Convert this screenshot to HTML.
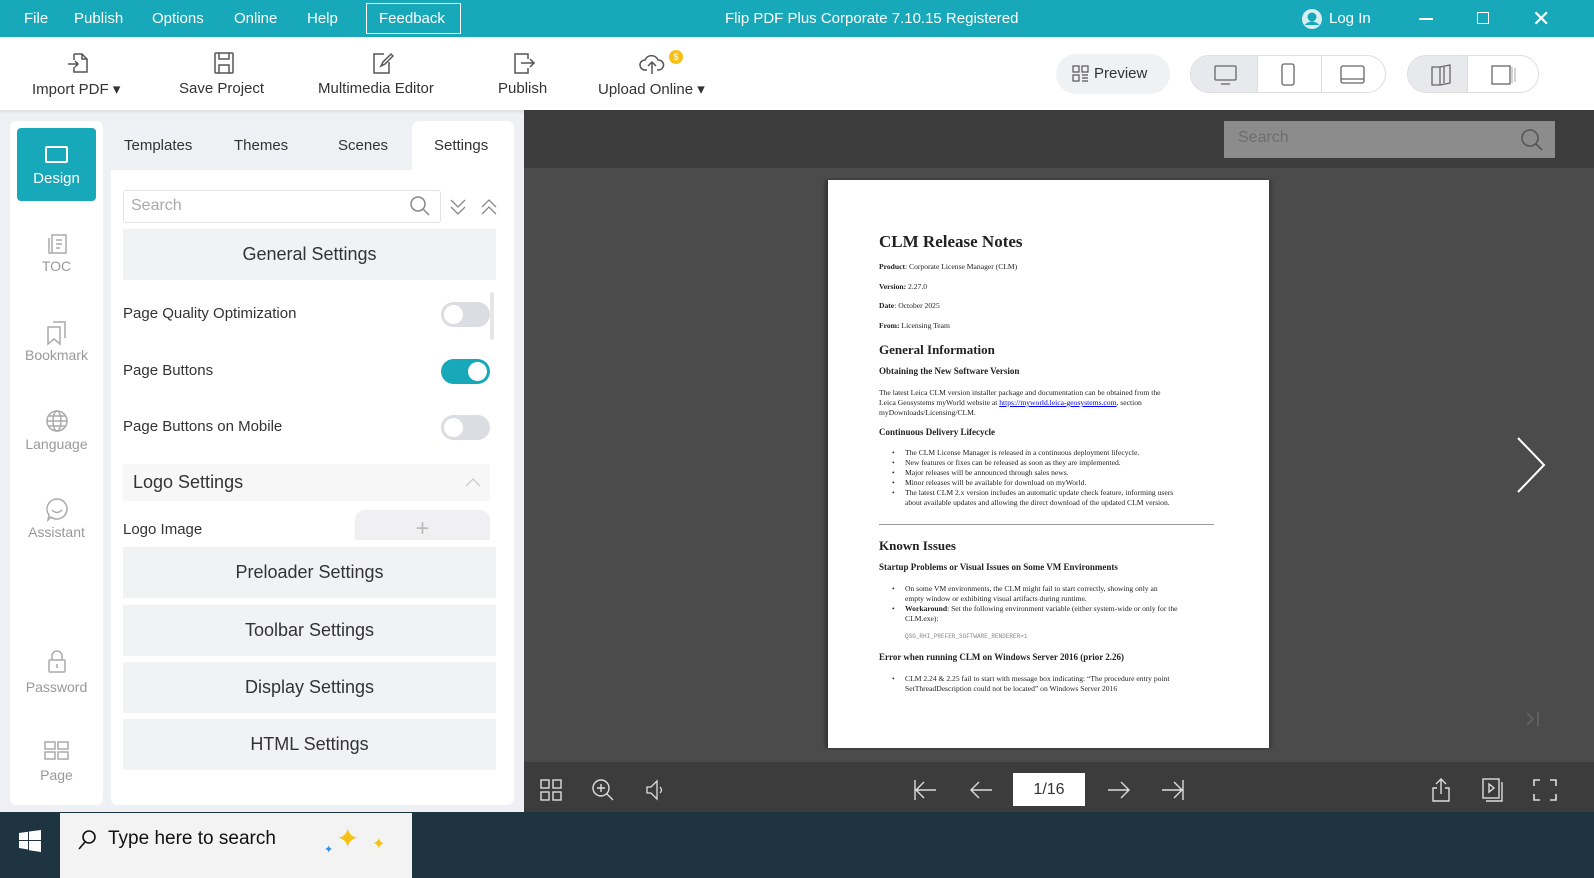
<!DOCTYPE html>
<html><head><meta charset="utf-8"><style>
*{margin:0;padding:0;box-sizing:border-box}
body{width:1594px;height:878px;overflow:hidden;font-family:"Liberation Sans","DejaVu Sans",sans-serif;position:relative;background:#eef0f3}
.a{position:absolute}
.tb{left:0;top:0;width:1594px;height:37px;background:#17a8b9;color:#fff;font-size:15px}
.tb span{position:absolute;top:10px}
.tool{left:0;top:37px;width:1594px;height:73px;background:#fff;box-shadow:0 2px 3px rgba(0,0,0,.08)}
.tl{position:absolute;top:80px;font-size:15px;color:#333;white-space:nowrap}
.nav{left:10px;top:121px;width:93px;height:684px;background:#fff;border-radius:6px}
.ni{position:absolute;left:0;width:93px;text-align:center;font-size:14px;color:#999}
.pan{left:111px;top:121px;width:403px;height:684px;background:#fff;border-radius:6px}
.tabs{left:111px;top:121px;width:403px;height:49px;background:#eef0f3}
.tab{position:absolute;top:137px;font-size:15px;color:#333}
.sec{position:absolute;left:123px;width:373px;height:51px;background:#f1f2f4;text-align:center;line-height:51px;font-size:18px;color:#333}
.row{position:absolute;left:123px;font-size:15px;color:#333}
.tg{position:absolute;left:441px;width:49px;height:25px;border-radius:13px;background:#dcdde2}
.tg::after{content:"";position:absolute;left:3px;top:3px;width:19px;height:19px;border-radius:50%;background:#fff}
.tg.on{background:#17a8b9}.tg.on::after{left:27px}
.vw{left:524px;top:110px;width:1070px;height:702px;background:#4b4b4b}
.pg{left:828px;top:180px;width:441px;height:568px;background:#fff;box-shadow:-3px 0 3px rgba(0,0,0,.3),3px 0 3px rgba(0,0,0,.2);font-family:"Liberation Serif",serif;color:#222}
.pg div{position:absolute;left:51px;white-space:nowrap;font-size:7.6px;line-height:10px}
.pg .h1{font-size:17px;font-weight:bold;line-height:20px}
.pg .h2{font-size:13px;font-weight:bold;line-height:15px}
.pg .h3{font-size:9px;font-weight:bold;line-height:11px}
.pg .li{left:77px}
.pg .li::before{content:"•";position:absolute;left:-13px}
.task{left:0;top:812px;width:1594px;height:66px;background:#1e3441}
</style></head><body>
<div class="a tb">
<span style="left:24px">File</span><span style="left:74px">Publish</span><span style="left:152px">Options</span><span style="left:234px">Online</span><span style="left:307px">Help</span>
<div class="a" style="left:366px;top:3px;width:95px;height:31px;border:1px solid #fff"></div><span style="left:379px">Feedback</span>
<span style="left:725px">Flip PDF Plus Corporate 7.10.15 Registered</span>
<svg class="a" style="left:1301px;top:8px" width="22" height="22"><circle cx="11" cy="11" r="10" fill="#d9eef1"/><circle cx="11" cy="9" r="4.5" fill="#17a8b9"/><path d="M3.5 17 Q11 10 18.5 17" fill="#17a8b9"/></svg>
<span style="left:1329px">Log In</span>
<div class="a" style="left:1419px;top:18px;width:14px;height:2px;background:#fff"></div>
<div class="a" style="left:1477px;top:12px;width:12px;height:12px;border:1.5px solid #fff"></div>
<span style="left:1532px;top:6px;font-size:22px">✕</span>
</div>
<div class="a tool">
<svg class="a" style="left:66px;top:14px" width="24" height="24" fill="none" stroke="#555" stroke-width="1.5"><path d="M8 3h8l5 5v13H8v-5M8 9V3M16 3v5h5M2 13h10M9 10l3 3-3 3"/></svg>
<svg class="a" style="left:212px;top:14px" width="24" height="24" fill="none" stroke="#555" stroke-width="1.5"><rect x="3" y="2" width="18" height="20" rx="1"/><path d="M7 2v6h10V2M7 22v-8h10v8"/></svg>
<svg class="a" style="left:370px;top:14px" width="24" height="24" fill="none" stroke="#555" stroke-width="1.5"><path d="M14 3H4v19h15V11M11 15l2-4 8-8 2 2-8 8z"/></svg>
<svg class="a" style="left:511px;top:14px" width="26" height="24" fill="none" stroke="#555" stroke-width="1.5"><path d="M17 8V3H4v19h13v-5M10 12h13M19 8l4 4-4 4"/></svg>
<svg class="a" style="left:639px;top:14px" width="32" height="24" fill="none" stroke="#555" stroke-width="1.5"><path d="M8 19H6a5 5 0 0 1 0-10 7 7 0 0 1 13 0 5 5 0 0 1 1 10h-2M13 23V12M9 15l4-4 4 4"/></svg>
<div class="a" style="left:669px;top:13px;width:14px;height:14px;border-radius:50%;background:#f5c116;color:#fff;font-size:9px;text-align:center;line-height:14px">$</div>
<div class="tl" style="left:32px;top:43px">Import PDF ▾</div>
<div class="tl" style="left:179px;top:43px">Save Project</div>
<div class="tl" style="left:318px;top:43px">Multimedia Editor</div>
<div class="tl" style="left:498px;top:43px">Publish</div>
<div class="tl" style="left:598px;top:43px">Upload Online ▾</div>
<div class="a" style="left:1056px;top:17px;width:114px;height:40px;border-radius:20px;background:#f0f1f3"></div>
<svg class="a" style="left:1072px;top:28px" width="18" height="18" fill="none" stroke="#555" stroke-width="1.2"><rect x="1" y="1" width="6" height="6"/><rect x="10" y="1" width="6" height="6"/><rect x="1" y="10" width="6" height="6"/><path d="M10 10h6M10 13h6M10 16h6"/></svg>
<div class="tl" style="left:1094px;top:28px">Preview</div>
<div class="a" style="left:1190px;top:18px;width:196px;height:38px;border-radius:19px;border:1px solid #ddd;overflow:hidden"><div class="a" style="left:0;top:0;width:67px;height:38px;background:#e8e9ec;border-right:1px solid #ddd"></div><div class="a" style="left:130px;top:0;width:1px;height:38px;background:#ddd"></div></div>
<svg class="a" style="left:1213px;top:27px" width="26" height="22" fill="none" stroke="#666" stroke-width="1.3"><rect x="2" y="2" width="21" height="14" rx="1"/><path d="M8 20h9"/></svg>
<svg class="a" style="left:1280px;top:26px" width="16" height="24" fill="none" stroke="#666" stroke-width="1.3"><rect x="2" y="1" width="12" height="21" rx="2"/></svg>
<svg class="a" style="left:1340px;top:28px" width="26" height="20" fill="none" stroke="#666" stroke-width="1.3"><rect x="1" y="1" width="23" height="17" rx="2"/><path d="M1 14h23"/></svg>
<div class="a" style="left:1407px;top:18px;width:132px;height:38px;border-radius:19px;border:1px solid #ddd;overflow:hidden"><div class="a" style="left:0;top:0;width:60px;height:38px;background:#e8e9ec;border-right:1px solid #ddd"></div></div>
<svg class="a" style="left:1430px;top:26px" width="24" height="24" fill="none" stroke="#666" stroke-width="1.3"><path d="M2 4h8v18H2zM10 22l10-2V2l-10 2M14 4v16"/></svg>
<svg class="a" style="left:1490px;top:26px" width="28" height="24" fill="none" stroke="#666" stroke-width="1.3"><rect x="2" y="3" width="18" height="18"/><path d="M22 4v16M25 5v14" stroke="#bbb"/></svg>
</div>
<div class="a nav"></div>
<div class="a" style="left:17px;top:128px;width:79px;height:73px;background:#17a8b9;border-radius:4px"></div>
<div class="a" style="left:45px;top:146px;width:23px;height:17px;border:2px solid #fff;border-radius:2px"></div>
<div class="ni" style="left:10px;top:170px;color:#fff;font-size:15px">Design</div>
<svg class="a" style="left:47px;top:233px" width="22" height="22" fill="none" stroke="#aaa" stroke-width="1.5"><rect x="5" y="2" width="14" height="18"/><path d="M2 5v15h3M9 7h6M9 11h6M9 15h4"/></svg>
<div class="ni" style="left:10px;top:258px">TOC</div>
<svg class="a" style="left:45px;top:320px" width="24" height="26" fill="none" stroke="#aaa" stroke-width="1.5"><path d="M8 2h12v16M3 7h12v17l-6-5-6 5z"/></svg>
<div class="ni" style="left:10px;top:347px">Bookmark</div>
<svg class="a" style="left:45px;top:409px" width="24" height="24" fill="none" stroke="#aaa" stroke-width="1.5"><circle cx="12" cy="12" r="10"/><ellipse cx="12" cy="12" rx="4" ry="10"/><path d="M2 12h20M4 7h16M4 17h16"/></svg>
<div class="ni" style="left:10px;top:436px">Language</div>
<svg class="a" style="left:45px;top:497px" width="24" height="26" fill="none" stroke="#aaa" stroke-width="1.5"><path d="M12 2a10 10 0 1 1-6 18l-3 3 1-5A10 10 0 0 1 12 2zM7 13q5 5 10 0"/></svg>
<div class="ni" style="left:10px;top:524px">Assistant</div>
<svg class="a" style="left:46px;top:650px" width="22" height="24" fill="none" stroke="#aaa" stroke-width="1.5"><rect x="3" y="10" width="16" height="12" rx="1"/><path d="M6 10V6a5 5 0 0 1 10 0v4M11 14v4"/></svg>
<div class="ni" style="left:10px;top:679px">Password</div>
<svg class="a" style="left:44px;top:741px" width="26" height="20" fill="none" stroke="#aaa" stroke-width="1.5"><rect x="1" y="1" width="10" height="7"/><rect x="14" y="1" width="10" height="7"/><rect x="1" y="11" width="10" height="7"/><rect x="14" y="11" width="10" height="7"/></svg>
<div class="ni" style="left:10px;top:767px">Page</div>
<div class="a pan"></div>
<div class="a tabs"></div>
<div class="a" style="left:412px;top:121px;width:102px;height:49px;background:#fff;border-radius:8px 6px 0 0"></div>
<div class="tab" style="left:124px">Templates</div><div class="tab" style="left:234px">Themes</div><div class="tab" style="left:338px">Scenes</div><div class="tab" style="left:434px">Settings</div>
<div class="a" style="left:123px;top:190px;width:318px;height:33px;border:1px solid #e2e3e6;border-radius:3px"></div>
<div class="a" style="left:131px;top:197px;font-size:16px;color:#aaa">Search</div>
<svg class="a" style="left:409px;top:195px" width="22" height="22" fill="none" stroke="#888" stroke-width="1.5"><circle cx="9" cy="9" r="7"/><path d="M14 14l6 6"/></svg>
<svg class="a" style="left:448px;top:197px" width="20" height="20" fill="none" stroke="#888" stroke-width="1.3"><path d="M3 3l7 7 7-7M3 10l7 7 7-7"/></svg>
<svg class="a" style="left:479px;top:197px" width="20" height="20" fill="none" stroke="#888" stroke-width="1.3"><path d="M3 10l7-7 7 7M3 17l7-7 7 7"/></svg>
<div class="sec" style="top:229px">General Settings</div>
<div class="a" style="left:490px;top:292px;width:4px;height:48px;background:#e6e6e6;border-radius:2px"></div>
<div class="row" style="top:305px">Page Quality Optimization</div><div class="tg" style="top:302px"></div>
<div class="row" style="top:362px">Page Buttons</div><div class="tg on" style="top:359px"></div>
<div class="row" style="top:418px">Page Buttons on Mobile</div><div class="tg" style="top:415px"></div>
<div class="a" style="left:123px;top:464px;width:367px;height:37px;background:#f7f7f8"></div>
<div class="a" style="left:133px;top:472px;font-size:18px;color:#333">Logo Settings</div>
<svg class="a" style="left:464px;top:476px" width="18" height="12" fill="none" stroke="#ccc" stroke-width="1.3"><path d="M2 10l7-7 7 7"/></svg>
<div class="row" style="top:521px">Logo Image</div>
<div class="a" style="left:355px;top:510px;width:135px;height:30px;background:#f0f0f2;border-radius:10px 10px 0 0;color:#bbb;font-size:24px;text-align:center;line-height:38px;overflow:hidden">+</div>
<div class="sec" style="top:547px">Preloader Settings</div>
<div class="sec" style="top:605px">Toolbar Settings</div>
<div class="sec" style="top:662px">Display Settings</div>
<div class="sec" style="top:719px">HTML Settings</div>
<div class="a vw"></div>
<div class="a" style="left:524px;top:110px;width:1070px;height:58px;background:#3c3c3c"></div>
<div class="a" style="left:1224px;top:121px;width:331px;height:37px;background:#8c8c8c"></div>
<div class="a" style="left:1238px;top:129px;font-size:16px;color:#6e6e6e">Search</div>
<svg class="a" style="left:1520px;top:128px" width="24" height="24" fill="none" stroke="#555" stroke-width="1.6"><circle cx="10" cy="10" r="8"/><path d="M16 16l6 6"/></svg>
<div class="a" style="left:524px;top:762px;width:1070px;height:50px;background:#3c3c3c"></div>
<svg class="a" style="left:1514px;top:435px" width="34" height="60" fill="none" stroke="#fff" stroke-width="2"><path d="M4 3l26 27L4 57"/></svg>
<svg class="a" style="left:1524px;top:710px" width="20" height="18" fill="none" stroke="#666" stroke-width="1.5"><path d="M3 3l6 6-6 6M14 2v14"/></svg>
<div class="a pg">
<div class="h1" style="top:52px">CLM Release Notes</div>
<div style="top:82px"><b>Product</b>: Corporate License Manager (CLM)</div>
<div style="top:102px"><b>Version:</b> 2.27.0</div>
<div style="top:121px"><b>Date</b>: October 2025</div>
<div style="top:141px"><b>From:</b> Licensing Team</div>
<div class="h2" style="top:162px">General Information</div>
<div class="h3" style="top:186px">Obtaining the New Software Version</div>
<div style="top:208px">The latest Leica CLM version installer package and documentation can be obtained from the</div>
<div style="top:218px">Leica Geosystems myWorld website at <u style="color:#00e">https://myworld.leica-geosystems.com</u>, section</div>
<div style="top:228px">myDownloads/Licensing/CLM.</div>
<div class="h3" style="top:247px">Continuous Delivery Lifecycle</div>
<div class="li" style="top:268px">The CLM License Manager is released in a continuous deployment lifecycle.</div>
<div class="li" style="top:278px">New features or fixes can be released as soon as they are implemented.</div>
<div class="li" style="top:288px">Major releases will be announced through sales news.</div>
<div class="li" style="top:298px">Minor releases will be available for download on myWorld.</div>
<div class="li" style="top:308px">The latest CLM 2.x version includes an automatic update check feature, informing users</div>
<div style="top:318px;left:77px">about available updates and allowing the direct download of the updated CLM version.</div>
<div style="top:344px;width:335px;height:1px;background:#999"></div>
<div class="h2" style="top:358px">Known Issues</div>
<div class="h3" style="top:382px">Startup Problems or Visual Issues on Some VM Environments</div>
<div class="li" style="top:404px">On some VM environments, the CLM might fail to start correctly, showing only an</div>
<div style="top:414px;left:77px">empty window or exhibiting visual artifacts during runtime.</div>
<div class="li" style="top:424px"><b>Workaround</b>: Set the following environment variable (either system-wide or only for the</div>
<div style="top:434px;left:77px">CLM.exe):</div>
<div style="top:452px;left:77px;font-family:'Liberation Mono',monospace;font-size:6px;color:#888">QSG_RHI_PREFER_SOFTWARE_RENDERER=1</div>
<div class="h3" style="top:472px">Error when running CLM on Windows Server 2016 (prior 2.26)</div>
<div class="li" style="top:494px">CLM 2.24 &amp; 2.25 fail to start with message box indicating: “The procedure entry point</div>
<div style="top:504px;left:77px">SetThreadDescription could not be located” on Windows Server 2016</div>
</div>
<svg class="a" style="left:540px;top:779px" width="22" height="22" fill="none" stroke="#ddd" stroke-width="1.4"><rect x="1" y="1" width="8" height="8"/><rect x="13" y="1" width="8" height="8"/><rect x="1" y="13" width="8" height="8"/><rect x="13" y="13" width="8" height="8"/></svg>
<svg class="a" style="left:591px;top:778px" width="24" height="24" fill="none" stroke="#ddd" stroke-width="1.4"><circle cx="10" cy="10" r="8"/><path d="M16 16l6 6M10 6v8M6 10h8"/></svg>
<svg class="a" style="left:645px;top:779px" width="20" height="22" fill="none" stroke="#ddd" stroke-width="1.3"><path d="M2 8h4l6-6v18l-6-6H2zM15 8q3 3 0 6"/></svg>
<svg class="a" style="left:912px;top:779px" width="26" height="22" fill="none" stroke="#ddd" stroke-width="1.4"><path d="M3 1v20M24 11H4M12 3l-8 8 8 8"/></svg>
<svg class="a" style="left:968px;top:779px" width="26" height="22" fill="none" stroke="#ddd" stroke-width="1.4"><path d="M24 11H3M11 3l-8 8 8 8"/></svg>
<div class="a" style="left:1013px;top:773px;width:72px;height:33px;background:#fff;text-align:center;line-height:33px;font-size:16px;color:#333">1/16</div>
<svg class="a" style="left:1106px;top:779px" width="26" height="22" fill="none" stroke="#ddd" stroke-width="1.4"><path d="M2 11h21M15 3l8 8-8 8"/></svg>
<svg class="a" style="left:1160px;top:779px" width="26" height="22" fill="none" stroke="#ddd" stroke-width="1.4"><path d="M23 1v20M2 11h20M14 3l8 8-8 8"/></svg>
<svg class="a" style="left:1430px;top:777px" width="22" height="26" fill="none" stroke="#ddd" stroke-width="1.4"><path d="M11 17V2M6 7l5-5 5 5M7 11H3v13h16V11h-4"/></svg>
<svg class="a" style="left:1480px;top:777px" width="24" height="26" fill="none" stroke="#ddd" stroke-width="1.4"><rect x="3" y="2" width="16" height="19"/><path d="M6 24h16V5M9 7l5 4-5 4z"/></svg>
<svg class="a" style="left:1533px;top:779px" width="24" height="22" fill="none" stroke="#ddd" stroke-width="1.6"><path d="M1 7V1h6M17 1h6v6M23 15v6h-6M7 21H1v-6"/></svg>
<div class="a task"></div>
<svg class="a" style="left:19px;top:830px" width="22" height="22" fill="#fff"><path d="M0 3l9-1.3V10H0zM10 1.5L22 0v10H10zM0 11h9v8.5L0 18zM10 11h12v11l-12-1.7z"/></svg>
<div class="a" style="left:60px;top:813px;width:352px;height:65px;background:#f3f3f3"></div>
<svg class="a" style="left:77px;top:829px" width="20" height="22" fill="none" stroke="#111" stroke-width="1.6"><circle cx="12" cy="8" r="6"/><path d="M8 13L2 20"/></svg>
<div class="a" style="left:108px;top:828px;font-size:19px;color:#111">Type here to search</div>
<div class="a" style="left:336px;top:822px;font-size:28px;color:#f5c116">✦</div>
<div class="a" style="left:372px;top:834px;font-size:16px;color:#f5c116">✦</div>
<div class="a" style="left:324px;top:843px;font-size:11px;color:#2a8ef0">✦</div>
<div class="a" style="left:247px;top:837px;width:5px;height:5px;border-radius:50%;background:#f06030;left:247px;display:none"></div>
<div class="a" style="left:247px;top:837px;width:4px;height:4px;border-radius:50%;background:#f06030;left:247px;left:247px;display:none"></div>
<div class="a" style="left:247px;top:0;display:none"></div>
<div class="a" style="left:247px"></div>
<div class="a" style="left:246px;top:0"></div>
<div class="a" style="left:247px;top:837px;display:none"></div>
<div class="a" style="left:247px;top:837px;display:none"></div>
<div class="a" style="left:246px;top:838px;display:none"></div>
<div class="a" style="left:246px;top:838px;display:none"></div>
<div class="a" style="left:247px;top:837px;display:none"></div>
<div class="a" style="left:246px;top:838px;display:none"></div>
<div class="a" style="left:246px;top:838px;display:none"></div>
<div class="a" style="left:247px;top:838px;display:none"></div>
<div class="a" style="left:247px;top:837px;display:none"></div>
<div class="a" style="left:247px;top:837px;display:none"></div>
<div class="a" style="left:247px;top:837px;display:none"></div>
<div class="a" style="left:247px;top:837px;display:none"></div>
<div class="a" style="left:246px;top:837px;display:none"></div>
<div class="a" style="left:247px;top:837px;display:none"></div>
<div class="a" style="left:247px;top:837px;display:none"></div>
<div class="a" style="left:246px;top:837px;display:none"></div>
<div class="a" style="left:246px;top:837px;display:none"></div>
<div class="a" style="left:246px;top:837px;display:none"></div>
<div class="a" style="left:247px;top:837px;display:none"></div>
<div class="a" style="left:247px;top:837px;display:none"></div>
<div class="a" style="left:246px;top:837px;display:none"></div>
<div class="a" style="left:247px;top:837px;display:none"></div>
<div class="a" style="left:246px;top:837px;display:none"></div>
<div class="a" style="left:247px;top:837px;display:none"></div>
<div class="a" style="left:246px;top:837px;display:none"></div>
<div class="a" style="left:247px;top:837px;display:none"></div>
<div class="a" style="left:246px;top:837px;display:none"></div>
<div class="a" style="left:247px;top:837px;display:none"></div>
<div class="a" style="left:246px;top:837px;display:none"></div>
<div class="a" style="left:247px;top:837px;display:none"></div>
<div class="a" style="left:246px;top:837px;display:none"></div>
<div class="a" style="left:247px;top:837px;display:none"></div>
<div class="a" style="left:246px;top:837px;display:none"></div>
<div class="a" style="left:246px;top:837px;display:none"></div>
<div class="a" style="left:247px;top:837px;display:none"></div>
<div class="a" style="left:246px;top:837px;display:none"></div>
<div class="a" style="left:246px;top:837px;display:none"></div>
<div class="a" style="left:247px;top:837px;display:none"></div>
<div class="a" style="left:246px;top:837px;display:none"></div>
<div class="a" style="left:246px;top:837px;display:none"></div>
<div class="a" style="left:246px;top:837px;display:none"></div>
<div class="a" style="left:246px;top:837px;display:none"></div>
<div class="a" style="left:246px;top:837px;display:none"></div>
<div class="a" style="left:246px;top:837px;display:none"></div>
<div class="a" style="left:246px;top:837px;display:none"></div>
<div class="a" style="left:246px;top:837px;display:none"></div>
<div class="a" style="left:246px;top:837px;display:none"></div>
<div class="a" style="left:246px;top:837px;display:none"></div>
<div class="a" style="left:246px;top:837px;display:none"></div>
<div class="a" style="left:246px;top:837px;display:none"></div>
<div class="a" style="left:246px;top:837px;display:none"></div>
<div class="a" style="left:246px;top:837px;display:none"></div>
<div class="a" style="left:246px;top:837px;display:none"></div>
<div class="a" style="left:246px;top:837px;display:none"></div>
<div class="a" style="left:246px;top:837px;display:none"></div>
<div class="a" style="left:246px;top:837px;display:none"></div>
<div class="a" style="left:246px;top:837px;display:none"></div>
<div class="a" style="left:246px;top:837px;display:none"></div>
<div class="a" style="left:246px;top:837px;display:none"></div>
<div class="a" style="left:246px;top:837px;display:none"></div>
<div class="a" style="left:246px;top:837px;display:none"></div>
<div class="a" style="left:246px;top:837px;display:none"></div>
<div class="a" style="left:246px;top:837px;display:none"></div>
<div class="a" style="left:246px;top:837px;display:none"></div>
<div class="a" style="left:246px;top:837px;display:none"></div>
<div class="a" style="left:246px;top:837px;display:none"></div>
<div class="a" style="left:246px;top:837px;display:none"></div>
<div class="a" style="left:246px;top:837px;display:none"></div>
<div class="a" style="left:246px;top:837px;display:none"></div>
<div class="a" style="left:246px;top:837px;display:none"></div>
<div class="a" style="left:246px;top:837px;display:none"></div>
<div class="a" style="left:246px;top:837px;display:none"></div>
<div class="a" style="left:246px;top:837px;display:none"></div>
<div class="a" style="left:246px;top:837px;display:none"></div>
<div class="a" style="left:246px;top:837px;display:none"></div>
<div class="a" style="left:246px;top:837px;display:none"></div>
<div class="a" style="left:246px;top:837px;display:none"></div>
<div class="a" style="left:246px;top:837px;display:none"></div>
<div class="a" style="left:246px;top:837px;display:none"></div>
<div class="a" style="left:246px;top:837px;display:none"></div>
<div class="a" style="left:246px;top:837px;display:none"></div>
<div class="a" style="left:246px;top:837px;display:none"></div>
<div class="a" style="left:246px;top:837px;display:none"></div>
<div class="a" style="left:246px;top:837px;display:none"></div>
<div class="a" style="left:246px;top:837px;display:none"></div>
<div class="a" style="left:246px;top:837px;display:none"></div>
<div class="a" style="left:246px;top:837px;display:none"></div>
<div class="a" style="left:246px;top:837px;display:none"></div>
<div class="a" style="left:246px;top:837px;display:none"></div>
<div class="a" style="left:246px;top:837px;display:none"></div>
<div class="a" style="left:246px;top:837px;display:none"></div>
<div class="a" style="left:246px;top:837px;display:none"></div>
<div class="a" style="left:246px;top:837px;display:none"></div>
<div class="a" style="left:246px;top:837px;display:none"></div>
<div class="a" style="left:246px;top:837px;display:none"></div>
<div class="a" style="left:246px;top:837px;display:none"></div>
<div class="a" style="left:246px;top:837px;display:none"></div>
<div class="a" style="left:246px;top:837px;display:none"></div>
<div class="a" style="left:246px;top:837px;display:none"></div>
<div class="a" style="left:246px;top:837px;display:none"></div>
<div class="a" style="left:246px;top:837px;display:none"></div>
<div class="a" style="left:246px;top:837px;display:none"></div>
<div class="a" style="left:246px;top:837px;display:none"></div>
<div class="a" style="left:246px;top:837px;display:none"></div>
<div class="a" style="left:246px;top:837px;display:none"></div>
<div class="a" style="left:246px;top:837px;display:none"></div>
<div class="a" style="left:246px;top:837px;display:none"></div>
<div class="a" style="left:246px;top:837px;display:none"></div>
<div class="a" style="left:246px;top:837px;display:none"></div>
<div class="a" style="left:246px;top:837px;display:none"></div>
<div class="a" style="left:246px;top:837px;display:none"></div>
<div class="a" style="left:246px;top:837px;display:none"></div>
<div class="a" style="left:246px;top:837px;display:none"></div>
<div class="a" style="left:246px;top:837px;display:none"></div>
<div class="a" style="left:246px;top:837px;display:none"></div>
<div class="a" style="left:246px;top:837px;display:none"></div>
<div class="a" style="left:246px;top:837px;display:none"></div>
<div class="a" style="left:246px;top:837px;display:none"></div>
<div class="a" style="left:246px;top:837px;display:none"></div>
<div class="a" style="left:246px;top:837px;display:none"></div>
<div class="a" style="left:246px;top:837px;display:none"></div>
<div class="a" style="left:246px;top:837px;display:none"></div>
<div class="a" style="left:246px;top:837px;display:none"></div>
<div class="a" style="left:246px;top:837px;display:none"></div>
<div class="a" style="left:246px;top:837px;display:none"></div>
<div class="a" style="left:246px;top:837px;display:none"></div>
<div class="a" style="left:246px;top:837px;display:none"></div>
<div class="a" style="left:246px;top:837px;display:none"></div>
<div class="a" style="left:246px;top:837px;display:none"></div>
<div class="a" style="left:246px;top:837px;display:none"></div>
<div class="a" style="left:246px;top:837px;display:none"></div>
<div class="a" style="left:246px;top:837px;display:none"></div>
<div class="a" style="left:246px;top:837px;display:none"></div>
<div class="a" style="left:246px;top:837px;display:none"></div>
<div class="a" style="left:246px;top:837px;display:none"></div>
<div class="a" style="left:246px;top:837px;display:none"></div>
<div class="a" style="left:246px;top:837px;display:none"></div>
<div class="a" style="left:246px;top:837px;display:none"></div>
<div class="a" style="left:246px;top:837px;display:none"></div>
<div class="a" style="left:246px;top:837px;display:none"></div>
<div class="a" style="left:246px;top:837px;display:none"></div>
<div class="a" style="left:246px;top:837px;display:none"></div>
<div class="a" style="left:246px;top:837px;display:none"></div>
<div class="a" style="left:246px;top:837px;display:none"></div>
<div class="a" style="left:246px;top:837px;display:none"></div>
<div class="a" style="left:246px;top:837px;display:none"></div>
<div class="a" style="left:246px;top:837px;display:none"></div>
<div class="a" style="left:246px;top:837px;display:none"></div>
<div class="a" style="left:246px;top:837px;display:none"></div>
<div class="a" style="left:246px;top:837px;display:none"></div>
<div class="a" style="left:246px;top:837px;display:none"></div>
<div class="a" style="left:246px;top:837px;display:none"></div>
<div class="a" style="left:246px;top:837px;display:none"></div>
<div class="a" style="left:246px;top:837px;display:none"></div>
<div class="a" style="left:246px;top:837px;display:none"></div>
<div class="a" style="left:246px;top:837px;display:none"></div>
<div class="a" style="left:246px;top:837px;display:none"></div>
<div class="a" style="left:246px;top:837px;display:none"></div>
<div class="a" style="left:246px;top:837px;display:none"></div>
<div class="a" style="left:246px;top:837px;display:none"></div>
<div class="a" style="left:246px;top:837px;display:none"></div>
<div class="a" style="left:246px;top:837px;display:none"></div>
<div class="a" style="left:246px;top:837px;display:none"></div>
<div class="a" style="left:246px;top:837px;display:none"></div>
<div class="a" style="left:246px;top:837px;display:none"></div>
<div class="a" style="left:246px;top:837px;display:none"></div>
<div class="a" style="left:246px;top:837px;display:none"></div>
<div class="a" style="left:246px;top:837px;display:none"></div>
<div class="a" style="left:246px;top:837px;display:none"></div>
<div class="a" style="left:246px;top:837px;display:none"></div>
<div class="a" style="left:246px;top:837px;display:none"></div>
<div class="a" style="left:246px;top:837px;display:none"></div>
<div class="a" style="left:246px;top:837px;display:none"></div>
<div class="a" style="left:246px;top:837px;display:none"></div>
<div class="a" style="left:246px;top:837px;display:none"></div>
<div class="a" style="left:246px;top:837px;display:none"></div>
<div class="a" style="left:246px;top:837px;display:none"></div>
<div class="a" style="left:246px;top:837px;display:none"></div>
<div class="a" style="left:246px;top:837px;display:none"></div>
<div class="a" style="left:246px;top:837px;display:none"></div>
<div class="a" style="left:246px;top:837px;display:none"></div>
<div class="a" style="left:246px;top:837px;display:none"></div>
<div class="a" style="left:246px;top:837px;display:none"></div>
<div class="a" style="left:246px;top:837px;display:none"></div>
<div class="a" style="left:246px;top:837px;display:none"></div>
<div class="a" style="left:246px;top:837px;display:none"></div>
<div class="a" style="left:246px;top:837px;display:none"></div>
<div class="a" style="left:246px;top:837px;display:none"></div>
<div class="a" style="left:246px;top:837px;display:none"></div>
<div class="a" style="left:246px;top:837px;display:none"></div>
<div class="a" style="left:246px;top:837px;display:none"></div>
<div class="a" style="left:246px;top:837px;display:none"></div>
<div class="a" style="left:246px;top:837px;display:none"></div>
<div class="a" style="left:246px;top:837px;display:none"></div>
<div class="a" style="left:246px;top:837px;display:none"></div>
<div class="a" style="left:246px;top:837px;display:none"></div>
<div class="a" style="left:246px;top:837px;display:none"></div>
<div class="a" style="left:246px;top:837px;display:none"></div>
<div class="a" style="left:246px;top:837px;display:none"></div>
<div class="a" style="left:246px;top:837px;display:none"></div>
<div class="a" style="left:246px;top:837px;display:none"></div>
<div class="a" style="left:246px;top:837px;display:none"></div>
<div class="a" style="left:246px;top:837px;display:none"></div>
<div class="a" style="left:246px;top:837px;display:none"></div>
<div class="a" style="left:246px;top:837px;display:none"></div>
<div class="a" style="left:246px;top:837px;display:none"></div>
<div class="a" style="left:246px;top:837px;display:none"></div>
<div class="a" style="left:246px;top:837px;display:none"></div>
<div class="a" style="left:246px;top:837px;display:none"></div>
<div class="a" style="left:246px;top:837px;display:none"></div>
<div class="a" style="left:246px;top:837px;display:none"></div>
<div class="a" style="left:246px;top:837px;display:none"></div>
<div class="a" style="left:246px;top:837px;display:none"></div>
<div class="a" style="left:246px;top:837px;display:none"></div>
<div class="a" style="left:246px;top:837px;display:none"></div>
<div class="a" style="left:246px;top:837px;display:none"></div>
<div class="a" style="left:246px;top:837px;display:none"></div>
<div class="a" style="left:246px;top:837px;display:none"></div>
<div class="a" style="left:246px;top:837px;display:none"></div>
<div class="a" style="left:246px;top:837px;display:none"></div>
<div class="a" style="left:246px;top:837px;display:none"></div>
<div class="a" style="left:246px;top:837px;display:none"></div>
<div class="a" style="left:246px;top:837px;display:none"></div>
<div class="a" style="left:246px;top:837px;display:none"></div>
<div class="a" style="left:246px;top:837px;display:none"></div>
<div class="a" style="left:246px;top:837px;display:none"></div>
<div class="a" style="left:246px;top:837px;display:none"></div>
<div class="a" style="left:246px;top:837px;display:none"></div>
<div class="a" style="left:246px;top:837px;display:none"></div>
<div class="a" style="left:246px;top:837px;display:none"></div>
<div class="a" style="left:246px;top:837px;display:none"></div>
<div class="a" style="left:246px;top:837px;display:none"></div>
<div class="a" style="left:246px;top:837px;display:none"></div>
<div class="a" style="left:246px;top:837px;display:none"></div>
<div class="a" style="left:246px;top:837px;display:none"></div>
<div class="a" style="left:246px;top:837px;display:none"></div>
<div class="a" style="left:246px;top:837px;display:none"></div>
<div class="a" style="left:246px;top:837px;display:none"></div>
<div class="a" style="left:246px;top:837px;display:none"></div>
<div class="a" style="left:246px;top:837px;display:none"></div>
<div class="a" style="left:246px;top:837px;display:none"></div>
<div class="a" style="left:246px;top:837px;display:none"></div>
<div class="a" style="left:246px;top:837px;display:none"></div>
<div class="a" style="left:246px;top:837px;display:none"></div>
<div class="a" style="left:246px;top:837px;display:none"></div>
<div class="a" style="left:246px;top:837px;display:none"></div>
<div class="a" style="left:246px;top:837px;display:none"></div>
<div class="a" style="left:246px;top:837px;display:none"></div>
<div class="a" style="left:246px;top:837px;display:none"></div>
<div class="a" style="left:246px;top:837px;display:none"></div>
<div class="a" style="left:246px;top:837px;display:none"></div>
<div class="a" style="left:246px;top:837px;display:none"></div>
<div class="a" style="left:246px;top:837px;display:none"></div>
<div class="a" style="left:246px;top:837px;display:none"></div>
<div class="a" style="left:246px;top:837px;display:none"></div>
<div class="a" style="left:246px;top:837px;display:none"></div>
<div class="a" style="left:246px;top:837px;display:none"></div>
<div class="a" style="left:246px;top:837px;display:none"></div>
<div class="a" style="left:246px;top:837px;display:none"></div>
<div class="a" style="left:246px;top:837px;display:none"></div>
<div class="a" style="left:246px;top:837px;display:none"></div>
<div class="a" style="left:246px;top:837px;display:none"></div>
<div class="a" style="left:246px;top:837px;display:none"></div>
<div class="a" style="left:246px;top:837px;display:none"></div>
<div class="a" style="left:246px;top:837px;display:none"></div>
<div class="a" style="left:246px;top:837px;display:none"></div>
<div class="a" style="left:246px;top:837px;display:none"></div>
<div class="a" style="left:246px;top:837px;display:none"></div>
<div class="a" style="left:246px;top:837px;display:none"></div>
<div class="a" style="left:246px;top:837px;display:none"></div>
<div class="a" style="left:246px;top:837px;display:none"></div>
<div class="a" style="left:246px;top:837px;display:none"></div>
<div class="a" style="left:246px;top:837px;display:none"></div>
<div class="a" style="left:246px;top:837px;display:none"></div>
<div class="a" style="left:246px;top:837px;display:none"></div>
<div class="a" style="left:246px;top:837px;display:none"></div>
<div class="a" style="left:246px;top:837px;display:none"></div>
<div class="a" style="left:246px;top:837px;display:none"></div>
<div class="a" style="left:246px;top:837px;display:none"></div>
<div class="a" style="left:246px;top:837px;display:none"></div>
<div class="a" style="left:246px;top:837px;display:none"></div>
<div class="a" style="left:246px;top:837px;display:none"></div>
<div class="a" style="left:246px;top:837px;display:none"></div>
<div class="a" style="left:246px;top:837px;display:none"></div>
<div class="a" style="left:246px;top:837px;display:none"></div>
<div class="a" style="left:246px;top:837px;display:none"></div>
<div class="a" style="left:246px;top:837px;display:none"></div>
<div class="a" style="left:246px;top:837px;display:none"></div>
<div class="a" style="left:246px;top:837px;display:none"></div>
<div class="a" style="left:246px;top:837px;display:none"></div>
<div class="a" style="left:246px;top:837px;display:none"></div>
<div class="a" style="left:246px;top:837px;display:none"></div>
<div class="a" style="left:246px;top:837px;display:none"></div>
<div class="a" style="left:246px;top:837px;display:none"></div>
<div class="a" style="left:246px;top:837px;display:none"></div>
<div class="a" style="left:246px;top:837px;display:none"></div>
<div class="a" style="left:246px;top:837px;display:none"></div>
<div class="a" style="left:246px;top:837px;display:none"></div>
<div class="a" style="left:246px;top:837px;display:none"></div>
<div class="a" style="left:246px;top:837px;display:none"></div>
<div class="a" style="left:246px;top:837px;display:none"></div>
<div class="a" style="left:246px;top:837px;display:none"></div>
<div class="a" style="left:246px;top:837px;display:none"></div>
<div class="a" style="left:246px;top:837px;display:none"></div>
<div class="a" style="left:246px;top:837px;display:none"></div>
<div class="a" style="left:246px;top:837px;display:none"></div>
<div class="a" style="left:246px;top:837px;display:none"></div>
<div class="a" style="left:246px;top:837px;display:none"></div>
<div class="a" style="left:246px;top:837px;display:none"></div>
<div class="a" style="left:246px;top:837px;display:none"></div>
<div class="a" style="left:246px;top:837px;display:none"></div>
<div class="a" style="left:246px;top:837px;display:none"></div>
<div class="a" style="left:246px;top:837px;display:none"></div>
<div class="a" style="left:246px;top:837px;display:none"></div>
<div class="a" style="left:246px;top:837px;display:none"></div>
<div class="a" style="left:246px;top:837px;display:none"></div>
<div class="a" style="left:246px;top:837px;display:none"></div>
<div class="a" style="left:246px;top:837px;display:none"></div>
<div class="a" style="left:246px;top:837px;display:none"></div>
<div class="a" style="left:246px;top:837px;display:none"></div>
<div class="a" style="left:246px;top:837px;display:none"></div>
<div class="a" style="left:246px;top:837px;display:none"></div>
<div class="a" style="left:246px;top:837px;display:none"></div>
<div class="a" style="left:246px;top:837px;display:none"></div>
<div class="a" style="left:246px;top:837px;display:none"></div>
<div class="a" style="left:246px;top:837px;display:none"></div>
<div class="a" style="left:246px;top:837px;display:none"></div>
<div class="a" style="left:246px;top:837px;display:none"></div>
<div class="a" style="left:246px;top:837px;display:none"></div>
<div class="a" style="left:246px;top:837px;display:none"></div>
<div class="a" style="left:246px;top:837px;display:none"></div>
<div class="a" style="left:246px;top:837px;display:none"></div>
<div class="a" style="left:246px;top:837px;display:none"></div>
<div class="a" style="left:246px;top:837px;display:none"></div>
<div class="a" style="left:246px;top:837px;display:none"></div>
<div class="a" style="left:246px;top:837px;display:none"></div>
<div class="a" style="left:246px;top:837px;display:none"></div>
<div class="a" style="left:246px;top:837px;display:none"></div>
<div class="a" style="left:246px;top:837px;display:none"></div>
<div class="a" style="left:246px;top:837px;display:none"></div>
<div class="a" style="left:246px;top:837px;display:none"></div>
<div class="a" style="left:246px;top:837px;display:none"></div>
<div class="a" style="left:246px;top:837px;display:none"></div>
<div class="a" style="left:246px;top:837px;display:none"></div>
<div class="a" style="left:246px;top:837px;display:none"></div>
<div class="a" style="left:246px;top:837px;display:none"></div>
<div class="a" style="left:246px;top:837px;display:none"></div>
<div class="a" style="left:246px;top:837px;display:none"></div>
<div class="a" style="left:246px;top:837px;display:none"></div>
<div class="a" style="left:246px;top:837px;display:none"></div>
<div class="a" style="left:246px;top:837px;display:none"></div>
<div class="a" style="left:246px;top:837px;display:none"></div>
<div class="a" style="left:246px;top:837px;display:none"></div>
<div class="a" style="left:246px;top:837px;display:none"></div>
<div class="a" style="left:246px;top:837px;display:none"></div>
<div class="a" style="left:246px;top:837px;display:none"></div>
<div class="a" style="left:246px;top:837px;display:none"></div>
<div class="a" style="left:246px;top:837px;display:none"></div>
<div class="a" style="left:246px;top:837px;display:none"></div>
<div class="a" style="left:246px;top:837px;display:none"></div>
<div class="a" style="left:246px;top:837px;display:none"></div>
<div class="a" style="left:246px;top:837px;display:none"></div>
<div class="a" style="left:246px;top:837px;display:none"></div>
<div class="a" style="left:246px;top:837px;display:none"></div>
<div class="a" style="left:246px;top:837px;display:none"></div>
<div class="a" style="left:246px;top:837px;display:none"></div>
<div class="a" style="left:246px;top:837px;display:none"></div>
<div class="a" style="left:246px;top:837px;display:none"></div>
<div class="a" style="left:246px;top:837px;display:none"></div>
<div class="a" style="left:246px;top:837px;display:none"></div>
<div class="a" style="left:246px;top:837px;display:none"></div>
<div class="a" style="left:246px;top:837px;display:none"></div>
<div class="a" style="left:246px;top:837px;display:none"></div>
<div class="a" style="left:246px;top:837px;display:none"></div>
<div class="a" style="left:246px;top:837px;display:none"></div>
<div class="a" style="left:246px;top:837px;display:none"></div>
<div class="a" style="left:246px;top:837px;display:none"></div>
<div class="a" style="left:246px;top:837px;display:none"></div>
<div class="a" style="left:246px;top:837px;display:none"></div>
<div class="a" style="left:246px;top:837px;display:none"></div>
<div class="a" style="left:246px;top:837px;display:none"></div>
<div class="a" style="left:246px;top:837px;display:none"></div>
<div class="a" style="left:246px;top:837px;display:none"></div>
<div class="a" style="left:246px;top:837px;display:none"></div>
<div class="a" style="left:246px;top:837px;display:none"></div>
<div class="a" style="left:246px;top:837px;display:none"></div>
<div class="a" style="left:246px;top:837px;display:none"></div>
<div class="a" style="left:246px;top:837px;display:none"></div>
<div class="a" style="left:246px;top:837px;display:none"></div>
<div class="a" style="left:246px;top:837px;display:none"></div>
<div class="a" style="left:246px;top:837px;display:none"></div>
<div class="a" style="left:246px;top:837px;display:none"></div>
<div class="a" style="left:246px;top:837px;display:none"></div>
<div class="a" style="left:246px;top:837px;display:none"></div>
<div class="a" style="left:246px;top:837px;display:none"></div>
<div class="a" style="left:246px;top:837px;display:none"></div>
<div class="a" style="left:246px;top:837px;display:none"></div>
<div class="a" style="left:246px;top:837px;display:none"></div>
<div class="a" style="left:246px;top:837px;display:none"></div>
<div class="a" style="left:246px;top:837px;display:none"></div>
<div class="a" style="left:246px;top:837px;display:none"></div>
<div class="a" style="left:246px;top:837px;display:none"></div>
<div class="a" style="left:246px;top:837px;display:none"></div>
<div class="a" style="left:246px;top:837px;display:none"></div>
<div class="a" style="left:246px;top:837px;display:none"></div>
<div class="a" style="left:246px;top:837px;display:none"></div>
</body></html>
